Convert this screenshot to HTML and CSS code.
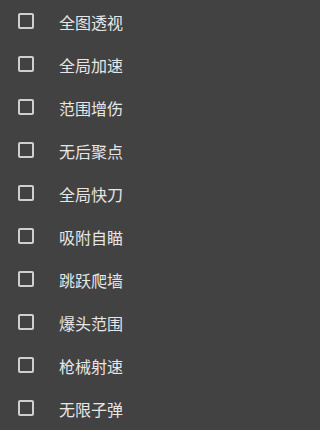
FILE: index.html
```html
<!DOCTYPE html>
<html lang="zh">
<head>
<meta charset="utf-8">
<link rel="stylesheet" href="styles.css">
</head>
<body>
<ul class="list">
  <li class="row"><span class="box"></span><span class="label">全图透视</span></li>
  <li class="row"><span class="box"></span><span class="label">全局加速</span></li>
  <li class="row"><span class="box"></span><span class="label">范围增伤</span></li>
  <li class="row"><span class="box"></span><span class="label">无后聚点</span></li>
  <li class="row"><span class="box"></span><span class="label">全局快刀</span></li>
  <li class="row"><span class="box"></span><span class="label">吸附自瞄</span></li>
  <li class="row"><span class="box"></span><span class="label">跳跃爬墙</span></li>
  <li class="row"><span class="box"></span><span class="label">爆头范围</span></li>
  <li class="row"><span class="box"></span><span class="label">枪械射速</span></li>
  <li class="row"><span class="box"></span><span class="label">无限子弹</span></li>
</ul>
</body>
</html>
```
FILE: styles.css
```css
html, body {
  margin: 0;
  padding: 0;
  background: #424242;
  height: 100%;
  overflow: hidden;
}
body {
  font-family: "Noto Sans CJK SC", "Noto Sans", sans-serif;
  color: #e6e6e6;
}
.list {
  list-style: none;
  margin: 0;
  padding: 0;
}
.row {
  display: flex;
  align-items: center;
  height: 43px;
  padding-left: 18px;
  box-sizing: border-box;
  margin-top: -1px;
  margin-bottom: 1px;
}
.box {
  width: 16px;
  height: 16px;
  box-sizing: border-box;
  border: 2px solid #cfcfcf;
  border-radius: 2px;
  flex: none;
}
.label {
  margin-left: 25px;
  font-size: 16px;
  line-height: 20px;
  padding-top: 3px;
}
```
